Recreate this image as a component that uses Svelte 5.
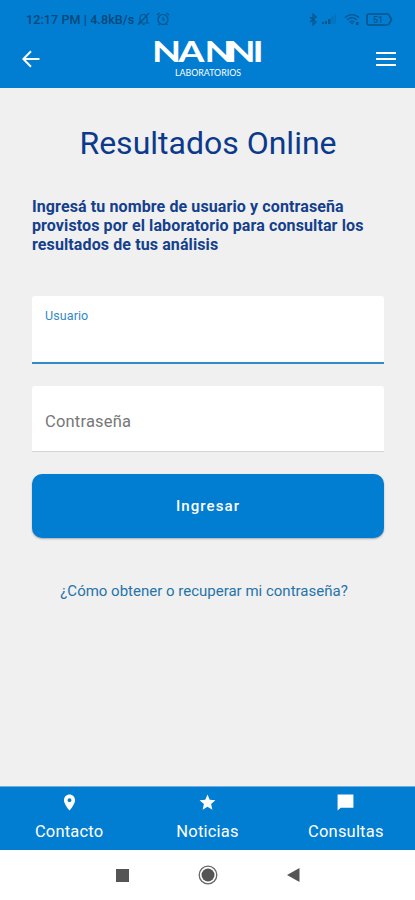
<script lang="ts">
  let username = $state("");
  let password = $state("");

  const tabs = [
    { label: "Contacto", icon: "M12 2C8.13 2 5 5.13 5 9c0 5.25 7 13 7 13s7-7.75 7-13c0-3.87-3.13-7-7-7zm0 9.5a2.5 2.5 0 0 1 0-5 2.5 2.5 0 0 1 0 5z" },
    { label: "Noticias", icon: "M12 17.27 18.18 21l-1.64-7.03L22 9.24l-7.19-.61L12 2 9.19 8.63 2 9.24l5.46 4.73L5.82 21z" },
    { label: "Consultas", icon: "M22 2H2v20l4-3.5h16z" },
  ];
</script>

<div class="screen">
  <header>
    <div class="status">
      <span class="clock">12:17 PM | 4.8kB/s</span>
      <svg class="bell" width="13" height="14" viewBox="0 0 13 14">
        <path d="M3 10V6a3.5 3.5 0 0 1 7 0v4l1 1H2zM5.5 12.5h2M1 13 12 1" />
      </svg>
      <svg class="alarm" width="14" height="14" viewBox="0 0 14 14">
        <circle cx="7" cy="7.5" r="5" />
        <path d="M7 5v3h2M1 3l2.5-2M13 3l-2.5-2M3.5 12l-1 1M10.5 12l1 1" />
      </svg>
      <div class="signals">
        <svg width="8" height="13" viewBox="0 0 8 13">
          <path d="m1 4 6 5-3 3V1l3 3-6 5" />
        </svg>
        <svg class="bars" width="15" height="12" viewBox="0 0 15 12">
          <path class="solid" d="M0 11V9h2v2zM3 11V8h2v3zM6 11V6h2.5v5z" />
          <path class="solid faint" d="M9.5 11V3.5h2V11zM12.5 11V1H14v10z" />
        </svg>
        <svg class="wifi" width="16" height="13" viewBox="0 0 16 13">
          <path d="M1 4.5c4-3.8 10-3.8 14 0M3.2 6.7c3-2.5 6.6-2.5 9.6 0M5.5 9c1.5-1.2 3.5-1.2 5 0" />
          <path class="solid" d="m6 9.5 2 2 2-2zM12 9h2.5v3H12z" />
        </svg>
        <svg class="battery" width="27" height="13" viewBox="0 0 27 13">
          <path d="M3 1h18q1.5 0 2 1l2.5 4.5L23 11q-.5 1-2 1H3q-2 0-2-2V3q0-2 2-2z" />
          <text x="12" y="9.7" text-anchor="middle">51</text>
        </svg>
      </div>
    </div>

    <div class="appbar">
      <button class="back" aria-label="Volver">
        <svg width="18" height="18" viewBox="0 0 18 18">
          <path d="M17.5 9H1.5M9 1.2 1.3 9 9 16.8" />
        </svg>
      </button>
      <svg class="logo" width="110" height="38" viewBox="0 0 110 38">
        <text class="brand" x="-0.8 18.7 38.2 54.4 73.8" y="23" transform="scale(1.35 1)">NANNI</text>
        <text class="tagline" x="22" y="36.5" textLength="66" lengthAdjust="spacingAndGlyphs">LABORATORIOS</text>
      </svg>
      <button class="menu" aria-label="Menú">
        <span></span>
        <span></span>
        <span></span>
      </button>
    </div>
  </header>

  <main>
    <h1>Resultados Online</h1>
    <p>
      Ingresá tu nombre de usuario y contraseña<br />
      provistos por el laboratorio para consultar los<br />
      resultados de tus análisis
    </p>

    <label class="field active">
      <span>Usuario</span>
      <input type="text" bind:value={username} />
    </label>
    <input class="field password" type="password" placeholder="Contraseña" bind:value={password} />

    <button class="submit">Ingresar</button>
    <button class="recover">¿Cómo obtener o recuperar mi contraseña?</button>
  </main>

  <nav>
    {#each tabs as tab (tab.label)}
      <button>
        <svg width="19" height="19" viewBox="0 0 24 24"><path d={tab.icon} /></svg>
        <span>{tab.label}</span>
      </button>
    {/each}
  </nav>

  <footer>
    <svg width="13" height="13" viewBox="0 0 13 13"><path d="M0 0h13v13H0z" /></svg>
    <svg width="20" height="20" viewBox="0 0 20 20">
      <circle class="ring" cx="10" cy="10" r="8.8" />
      <circle cx="10" cy="10" r="6.5" />
    </svg>
    <svg width="13" height="14" viewBox="0 0 13 14"><path d="M0 7 12.5 0v14z" /></svg>
  </footer>
</div>

<style>
  :global(body) {
    margin: 0;
  }
  .screen {
    height: 900px;
    display: flex;
    flex-direction: column;
    background: #f0f0f0;
    font-family: Roboto, sans-serif;
    overflow: hidden;
  }
  button {
    font-family: inherit;
    border: none;
    padding: 0;
    background: transparent;
    cursor: pointer;
  }
  svg {
    display: block;
    flex: none;
  }
  header {
    height: 88px;
    background: #017dd1;
    flex: none;
  }
  .status {
    height: 38px;
    box-sizing: border-box;
    padding: 0 22px 0 26px;
    display: flex;
    align-items: center;
    color: #064878;
  }
  .status svg {
    fill: none;
    stroke: #075489;
    stroke-width: 1.2;
  }
  .clock {
    width: 108px;
    font-size: 12.5px;
    font-weight: 500;
    letter-spacing: 0.1px;
    white-space: nowrap;
  }
  .bell {
    margin-left: 3px;
  }
  .alarm {
    margin-left: 6px;
  }
  .signals {
    margin-left: auto;
    display: flex;
    align-items: center;
  }
  .signals .bars {
    margin-left: 5px;
  }
  .signals .wifi {
    margin-left: 7px;
  }
  .signals .battery {
    margin-left: 6px;
    stroke-width: 1.6;
  }
  .status .solid {
    fill: #075489;
    stroke: none;
  }
  .status .faint {
    opacity: 0.25;
  }
  .battery text {
    fill: #075489;
    stroke: none;
    font-size: 9px;
    font-weight: 500;
  }
  .appbar {
    height: 50px;
    box-sizing: border-box;
    padding: 0 19px 0 22px;
    display: flex;
    justify-content: space-between;
    align-items: flex-start;
  }
  .back {
    margin-top: 12px;
  }
  .back path {
    fill: none;
    stroke: #fff;
    stroke-width: 2;
  }
  .logo {
    margin-top: 1px;
    fill: #fff;
    overflow: visible;
  }
  .brand {
    font-family: Lato, sans-serif;
    font-size: 28px;
    font-weight: 700;
  }
  .tagline {
    font-family: Lato, sans-serif;
    font-size: 8.5px;
  }
  .menu {
    margin-top: 14px;
    width: 20px;
    display: flex;
    flex-direction: column;
    gap: 4px;
  }
  .menu span {
    height: 2px;
    background: #fff;
  }
  main {
    flex: 1;
    padding: 0 31px 0 32px;
    display: flex;
    flex-direction: column;
  }
  h1 {
    margin: 36px 0 0;
    font-size: 32px;
    line-height: 38px;
    font-weight: 400;
    text-align: center;
    color: #0b3a8c;
    white-space: nowrap;
  }
  p {
    margin: 35px 0 0;
    font-size: 16px;
    line-height: 19px;
    font-weight: 700;
    letter-spacing: 0.11px;
    color: #143f8c;
    white-space: nowrap;
  }
  .field {
    box-sizing: border-box;
    background: #fff;
    border: none;
    border-radius: 3px 3px 0 0;
    outline: none;
    padding: 0 13px;
    font-family: inherit;
  }
  .active {
    margin-top: 42px;
    height: 68px;
    padding-top: 12px;
    border-bottom: 2px solid #2f8cc6;
    display: flex;
    flex-direction: column;
  }
  .active span {
    font-size: 12.5px;
    line-height: 16px;
    letter-spacing: 0.1px;
    color: #3189c4;
  }
  .active input {
    border: none;
    outline: none;
    padding: 0;
    height: 30px;
    font: 16px Roboto, sans-serif;
  }
  .password {
    margin-top: 22px;
    height: 66px;
    padding-top: 6px;
    border-bottom: 1px solid #d4d4d4;
    font-size: 16.5px;
    letter-spacing: 0.2px;
  }
  .password::placeholder {
    color: #777;
    opacity: 1;
  }
  .submit {
    margin-top: 22px;
    height: 64px;
    border-radius: 10px;
    background: #017dd1;
    box-shadow: 0 1px 2px rgba(0, 0, 0, 0.3);
    color: #fff;
    font-size: 15px;
    font-weight: 500;
    letter-spacing: 1.1px;
  }
  .recover {
    margin: 43px 8px 0 0;
    align-self: center;
    color: #2673aa;
    font-size: 15px;
    line-height: 20px;
    white-space: nowrap;
  }
  nav {
    height: 64px;
    box-sizing: border-box;
    flex: none;
    background: #017dd1;
    border-top: 1px solid #6fafdb;
    display: flex;
  }
  nav button {
    flex: 1;
    display: flex;
    flex-direction: column;
    align-items: center;
    padding-top: 6px;
    color: #fff;
    font-size: 16.5px;
    letter-spacing: 0.2px;
    line-height: 20px;
  }
  nav svg {
    fill: #fff;
  }
  nav span {
    margin-top: 10px;
  }
  footer {
    height: 50px;
    flex: none;
    background: #fff;
    display: flex;
    justify-content: center;
    align-items: center;
    gap: 69px;
  }
  footer svg {
    fill: #555;
  }
  footer .ring {
    fill: none;
    stroke: #666;
    stroke-width: 1.3;
  }
</style>
